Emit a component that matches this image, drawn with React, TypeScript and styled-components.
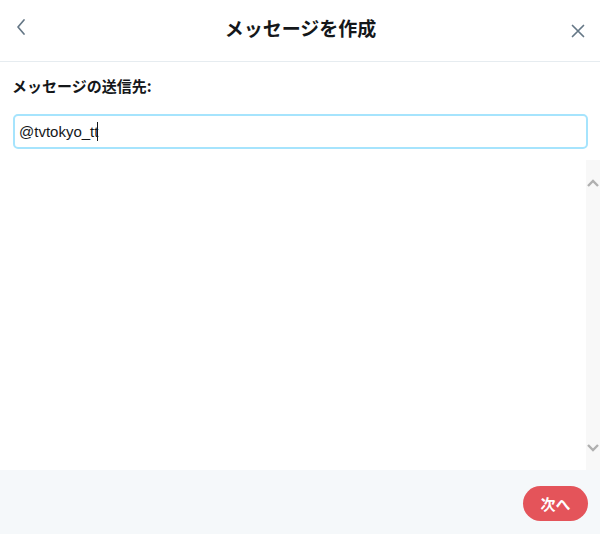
import React from "react";
import styled, { createGlobalStyle } from "styled-components";

const Global = createGlobalStyle`
  html, body { margin: 0; padding: 0; background: #fff; }
  body { font-family: "Noto Sans CJK JP", "Liberation Sans", sans-serif; }
`;

const Page = styled.div`
  width: 600px;
  height: 534px;
  display: flex;
  flex-direction: column;
  background: #fff;
  overflow: hidden;
`;

const Header = styled.div`
  height: 62px;
  border-bottom: 1px solid #e6ecf0;
  display: flex;
  align-items: center;
  justify-content: space-between;
  padding: 0 12px 0 11px;
  box-sizing: border-box;
  flex-shrink: 0;
`;

const IconButton = styled.button<{ $offset?: number }>`
  width: 20px;
  height: 20px;
  padding: 0;
  border: none;
  background: none;
  display: flex;
  align-items: center;
  justify-content: center;
  color: #657786;
  margin-top: ${(p) => p.$offset ?? 0}px;
`;

const Title = styled.h1`
  margin: 0;
  font-size: 19px;
  font-weight: 700;
  color: #14171a;
  margin-top: -7px;
  margin-left: 2px;
`;

const Body = styled.div`
  flex: 1;
  display: flex;
  flex-direction: column;
  min-height: 0;
`;

const Label = styled.div`
  font-size: 15px;
  font-weight: 700;
  color: #14171a;
  padding: 13px 12px 0 12px;
  height: 24px;
`;

const InputWrap = styled.div`
  padding: 15px 12px 0 13px;
`;

const Input = styled.div`
  height: 35px;
  box-sizing: border-box;
  border: 2px solid #a6e4fd;
  border-radius: 5px;
  display: flex;
  align-items: center;
  padding: 0 4px;
  font-family: "Liberation Sans", Arial, sans-serif;
  font-size: 15px;
  color: #14171a;
`;

const Caret = styled.span`
  display: inline-block;
  width: 1px;
  height: 19px;
  background: #14171a;
  margin-left: -1px;
`;

const ListArea = styled.div`
  flex: 1;
  display: flex;
  justify-content: flex-end;
  margin-top: 11px;
`;

const Scrollbar = styled.div`
  width: 14px;
  background: #f8f8f8;
  display: flex;
  flex-direction: column;
  justify-content: space-between;
  align-items: center;
  padding: 18px 0 17px;
  color: #b0b0b0;
`;

const Footer = styled.div`
  height: 64px;
  background: #f5f8fa;
  display: flex;
  align-items: center;
  justify-content: flex-end;
  padding: 0 12px;
  flex-shrink: 0;
`;

const NextButton = styled.button`
  height: 35px;
  width: 65px;
  border-radius: 18px;
  border: none;
  background: #e4545a;
  color: #fff;
  font-family: "Noto Sans CJK JP", sans-serif;
  font-size: 15px;
  font-weight: 700;
  margin-top: 3px;
`;

export default function App() {
  return (
    <>
      <Global />
      <Page>
        <Header>
          <IconButton $offset={-8} aria-label="back">
            <svg width="14" height="18" viewBox="0 0 14 18">
              <path d="M10 2 L4 9 L10 16" fill="none" stroke="currentColor" strokeWidth="1.7" strokeLinecap="round" strokeLinejoin="round" />
            </svg>
          </IconButton>
          <Title>メッセージを作成</Title>
          <IconButton $offset={0} aria-label="close">
            <svg width="16" height="16" viewBox="0 0 16 16">
              <path d="M2.5 2.5 L13.5 13.5 M13.5 2.5 L2.5 13.5" fill="none" stroke="currentColor" strokeWidth="1.7" strokeLinecap="round" />
            </svg>
          </IconButton>
        </Header>
        <Body>
          <Label>メッセージの送信先:</Label>
          <InputWrap>
            <Input>
              @tvtokyo_tt<Caret />
            </Input>
          </InputWrap>
          <ListArea>
            <Scrollbar>
              <svg width="14" height="10" viewBox="0 0 14 10">
                <path d="M2 8 L7 3 L12 8" fill="none" stroke="currentColor" strokeWidth="2.4" />
              </svg>
              <svg width="14" height="10" viewBox="0 0 14 10">
                <path d="M2 2 L7 7 L12 2" fill="none" stroke="currentColor" strokeWidth="2.4" />
              </svg>
            </Scrollbar>
          </ListArea>
        </Body>
        <Footer>
          <NextButton>次へ</NextButton>
        </Footer>
      </Page>
    </>
  );
}
